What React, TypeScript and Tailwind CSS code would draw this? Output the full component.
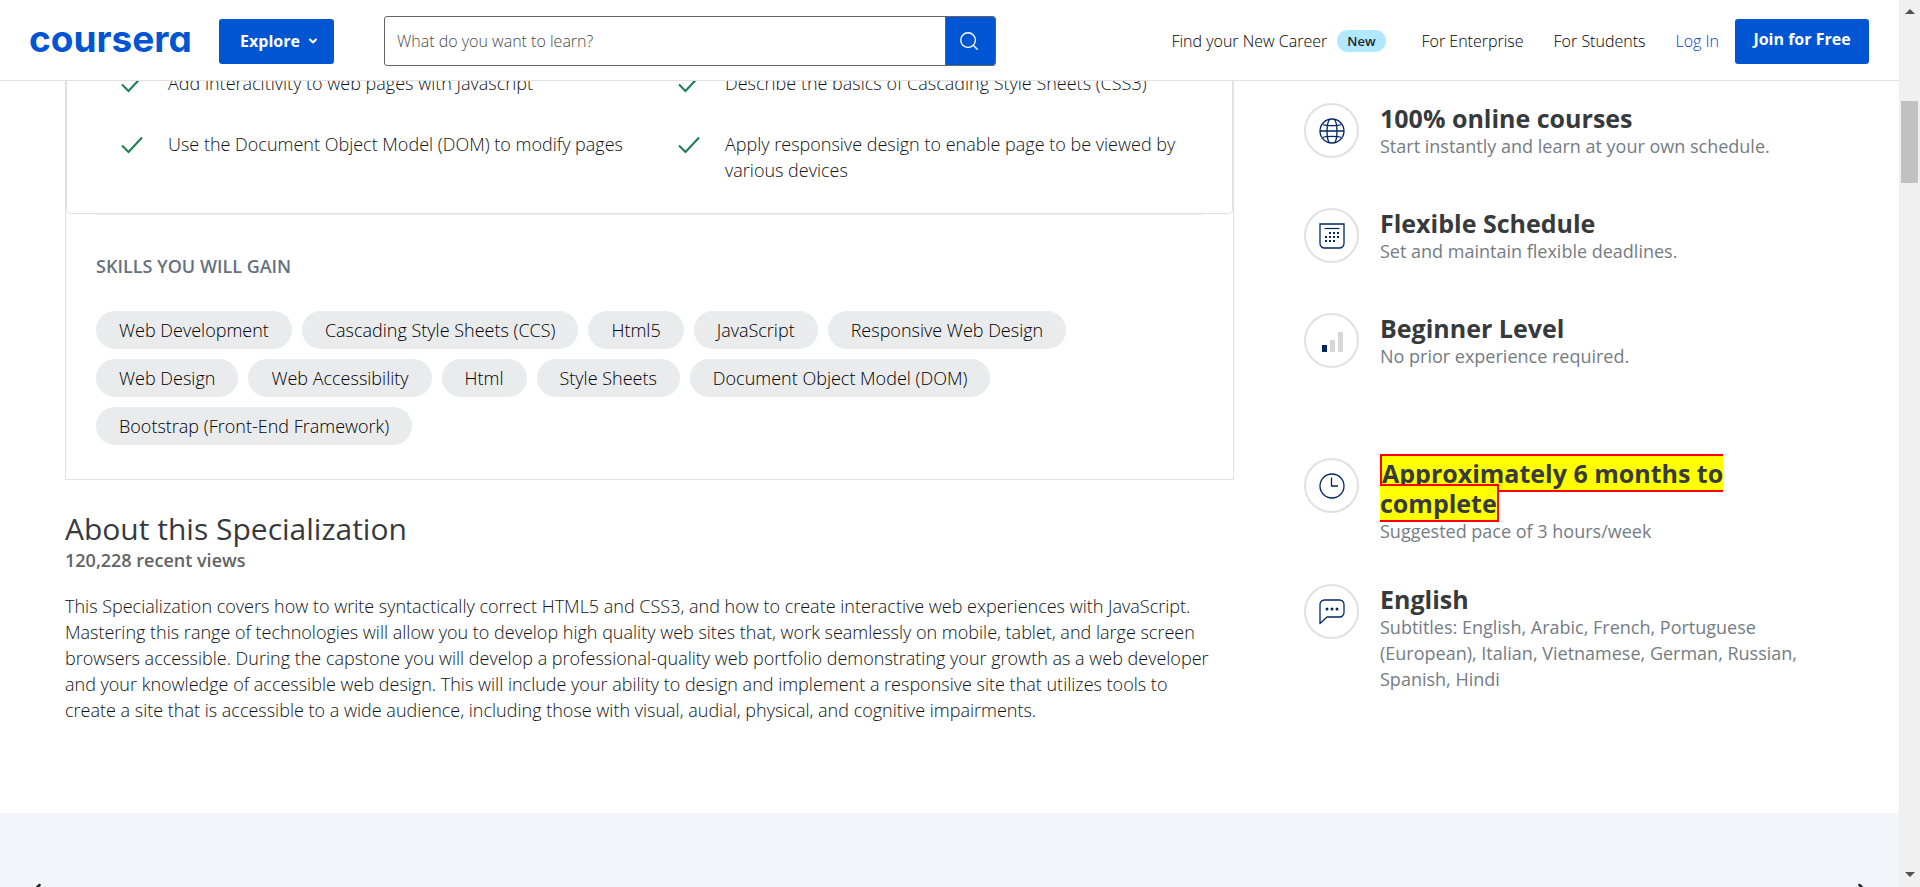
import React from "react";
import { Search, ChevronDown, ChevronLeft, ChevronRight } from "lucide-react";

const skills = [
  "Web Development",
  "Cascading Style Sheets (CCS)",
  "Html5",
  "JavaScript",
  "Responsive Web Design",
  "Web Design",
  "Web Accessibility",
  "Html",
  "Style Sheets",
  "Document Object Model (DOM)",
  "Bootstrap (Front-End Framework)",
];

const outcomes = [
  "Add interacitivity to web pages with Javascript",
  "Describe the basics of Cascading Style Sheets (CSS3)",
  "Use the Document Object Model (DOM) to modify pages",
  "Apply responsive design to enable page to be viewed by various devices",
];

function CheckIcon() {
  return (
    <svg className="mt-[5px] shrink-0" width="22" height="18" viewBox="0 0 22 18" fill="none" stroke="#1d7c50" strokeWidth="2" aria-hidden="true">
      <path d="M1 9.500L7.500 16 21 1.500" />
    </svg>
  );
}

function GlobeIcon() {
  return (
    <svg width="26" height="26" viewBox="0 0 26 26" fill="none" stroke="#002761" strokeWidth="1.3" aria-hidden="true">
      <circle cx="13" cy="13" r="12" />
      <path d="M1 13h24M4 6.500c2.500 1.500 15.500 1.500 18 0M4 19.500c2.500-1.500 15.500-1.500 18 0M10.500 1.300C7.500 5 7 21 10.500 24.700M15.500 1.300C18.500 5 19 21 15.500 24.700" />
    </svg>
  );
}

function CalendarIcon() {
  const dots = [
    [10, 9], [14, 9], [18, 9],
    [6, 13], [10, 13], [14, 13], [18, 13],
    [6, 17], [10, 17], [14, 17],
  ];
  return (
    <svg width="26" height="26" viewBox="0 0 26 26" fill="none" stroke="#002761" aria-hidden="true">
      <path d="M1 1h24v19.500a4.500 4.500 0 0 1-4.500 4.500h-15a4.500 4.500 0 0 1-4.500-4.500z" strokeWidth="1.300" />
      <path d="M5.500 5.500h15" strokeWidth="1.200" />
      {dots.map(([x, y]) => (
        <rect key={`${x}-${y}`} x={x} y={y} width="2" height="2" fill="#002761" stroke="none" />
      ))}
    </svg>
  );
}

function LevelIcon() {
  return (
    <svg width="26" height="26" viewBox="0 0 26 26" aria-hidden="true">
      <rect x="3" y="17" width="5" height="7" fill="#002761" />
      <rect x="11" y="12" width="5" height="12" fill="#d8d8d8" />
      <rect x="19" y="4" width="5" height="20" fill="#d8d8d8" />
    </svg>
  );
}

function ClockIcon() {
  return (
    <svg width="26" height="26" viewBox="0 0 26 26" fill="none" stroke="#002761" strokeWidth="1.3" aria-hidden="true">
      <circle cx="13" cy="13" r="12" />
      <path d="M12.500 4.500v8.500h6.500" />
    </svg>
  );
}

function ChatIcon() {
  return (
    <svg width="26" height="26" viewBox="0 0 26 26" fill="none" stroke="#002761" strokeWidth="1.3" aria-hidden="true">
      <path d="M1 24.500V5.500a4.500 4.500 0 0 1 4.500-4.500h15a4.500 4.500 0 0 1 4.500 4.500v8a4.500 4.500 0 0 1-4.500 4.500H8z" strokeLinejoin="round" />
      <g fill="#002761" stroke="none">
        <circle cx="8" cy="10" r="1.500" />
        <circle cx="13" cy="10" r="1.500" />
        <circle cx="18" cy="10" r="1.500" />
      </g>
    </svg>
  );
}

function Fact({ icon, title, children }: { icon: React.ReactNode; title: React.ReactNode; children: React.ReactNode }) {
  return (
    <li className="flex gap-[21px]">
      <span className="flex size-[55px] shrink-0 items-center justify-center rounded-full border-2 border-[#e1e1e1]">{icon}</span>
      <div>
        <h3 className="text-[25px] leading-[30px] font-bold text-[#373a3c]">{title}</h3>
        <p className="text-lg leading-[26px] text-[#757c84]">{children}</p>
      </div>
    </li>
  );
}

export default function App() {
  return (
    <div className="flex h-screen overflow-hidden bg-white font-['Open_Sans',sans-serif] text-[#373a3c]">
      <div className="min-w-0 flex-1">
        <header className="relative z-10 flex h-[81px] items-center border-b border-[#e1e1e1] bg-white pt-[2px] pr-[30px] pl-[29px]">
          <a href="#home" className="w-[190px] pb-1 font-['Inter',sans-serif] text-[37px] leading-[40px] font-bold text-[#0056d2] [font-feature-settings:'cv11']">coursera</a>
          <button className="flex h-[45px] w-[115px] items-center justify-center gap-[7px] rounded-[3px] bg-[#0056d2] pl-[6px] font-bold text-white">
            Explore
            <ChevronDown size={12} strokeWidth={4} />
          </button>
          <form className="ml-[50px] flex h-[50px] w-[612px] overflow-hidden rounded-[3px] border border-[#636363]" onSubmit={(e) => e.preventDefault()}>
            <input aria-label="What do you want to learn?" placeholder="What do you want to learn?" className="min-w-0 flex-1 px-3 font-light outline-none placeholder:text-[#4a4a4a]" />
            <button aria-label="Search" className="flex w-[50px] items-center justify-center border-l border-[#636363] bg-[#0056d2] pr-1 text-white">
              <Search size={22} strokeWidth={1.5} />
            </button>
          </form>
          <nav className="ml-auto flex items-center text-base font-light text-black">
            <a href="#career">Find your New Career</a>
            <span className="ml-[10px] rounded-full bg-[#b1e8ff] px-[10px] text-[13px] leading-[22px] font-semibold text-[#1f1f1f]">New</span>
            <a href="#enterprise" className="ml-9">For Enterprise</a>
            <a href="#students" className="ml-[30px]">For Students</a>
            <a href="#login" className="ml-[30px] text-[#0040d0]">Log In</a>
            <a href="#join" className="ml-4 flex h-[45px] w-[134px] justify-center rounded-[3px] bg-[#0056d2] leading-[40px] font-bold text-white">Join for Free</a>
          </nav>
        </header>

        <main className="flex h-[732px] pl-[65px]">
          <div className="w-[1169px]">
            <div className="-mt-[11px] border border-t-0 border-[#e1e1e1]">
              <ul className="grid grid-cols-[557px_1fr] gap-y-[35px] rounded-b-[5px] border border-t-0 border-[#e1e1e1] pr-[40px] pb-[30px] pl-[54px]">
                {outcomes.map((text) => (
                  <li key={text} className="flex gap-[25px] text-lg leading-[26px] font-light text-[#101214]">
                    <CheckIcon />
                    <span>{text}</span>
                  </li>
                ))}
              </ul>
              <div className="mx-[30px] border-t border-[#f0f0f0] pt-[38px] pb-[34px]">
                <h2 className="text-lg leading-[26px] font-semibold text-[#66717e]">SKILLS YOU WILL GAIN</h2>
                <ul className="mt-8 flex flex-wrap gap-[10px]">
                  {skills.map((s) => (
                    <li key={s} className="rounded-full bg-[#eaebed] px-[23px] text-lg leading-[38px] font-light text-black">{s}</li>
                  ))}
                </ul>
              </div>
            </div>
            <h2 className="mt-[29px] text-3xl leading-[40px] font-normal">About this Specialization</h2>
            <p className="text-lg leading-[22px] font-semibold text-[#636363]">120,228 recent views</p>
            <p className="mt-[22px] pr-4 text-lg leading-[26px] font-light text-[#101214]">
              This Specialization covers how to write syntactically correct HTML5 and CSS3, and how to create interactive web experiences with JavaScript. Mastering this range of technologies will allow you to develop high quality web sites that, work seamlessly on mobile, tablet, and large screen browsers accessible. During the capstone you will develop a professional-quality web portfolio demonstrating your growth as a web developer and your knowledge of accessible web design. This will include your ability to design and implement a responsive site that utilizes tools to create a site that is accessible to a wide audience, including those with visual, audial, physical, and cognitive impairments.
            </p>
          </div>
          <aside className="min-w-0 flex-1 pt-[22px] pr-[95px] pl-[70px]">
            <ul className="flex flex-col gap-[49px]">
              <Fact icon={<GlobeIcon />} title="100% online courses">Start instantly and learn at your own schedule.</Fact>
              <Fact icon={<CalendarIcon />} title="Flexible Schedule">Set and maintain flexible deadlines.</Fact>
              <Fact icon={<LevelIcon />} title="Beginner Level">No prior experience required.</Fact>
            </ul>
            <ul className="mt-[89px] flex flex-col gap-10">
              <Fact icon={<ClockIcon />} title={<mark className="border-2 border-[#ff0000] bg-[#ffff00] text-[#373a3c]">Approximately 6 months to complete</mark>}>
                Suggested pace of 3 hours/week
              </Fact>
              <Fact icon={<ChatIcon />} title="English">
                Subtitles: English, Arabic, French, Portuguese (European), Italian, Vietnamese, German, Russian, Spanish, Hindi
              </Fact>
            </ul>
          </aside>
        </main>

        <section className="flex justify-between bg-[#f3f5fa] px-[27px] pt-[67px] pb-20 text-[#1f1f1f]">
          <button aria-label="Previous"><ChevronLeft size={20} strokeWidth={3} /></button>
          <button aria-label="Next"><ChevronRight size={20} strokeWidth={3} /></button>
        </section>
      </div>

      <div className="flex w-[21px] shrink-0 flex-col items-center bg-[#f0f0f0] pt-[9px] pb-[10px]" aria-hidden="true">
        <svg width="10" height="5" viewBox="0 0 10 5" fill="#505050"><path d="M0 5L5 0l5 5z" /></svg>
        <span className="mt-[87px] h-[82px] w-[17px] bg-[#c1c1c1]" />
        <svg className="mt-auto" width="10" height="5" viewBox="0 0 10 5" fill="#505050"><path d="M0 0l5 5 5-5z" /></svg>
      </div>
    </div>
  );
}
